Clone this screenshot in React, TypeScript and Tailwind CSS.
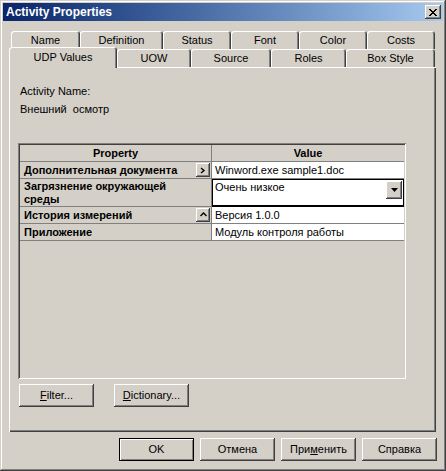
import React from "react";

const row1 = [
  { label: "Name", w: "w-[69px]" },
  { label: "Definition", w: "w-[83px]" },
  { label: "Status", w: "w-[68px]" },
  { label: "Font", w: "w-[68px]" },
  { label: "Color", w: "w-[68px]" },
  { label: "Costs", w: "w-[68px]" },
];

const row2 = [
  { label: "UOW", w: "w-[74px]" },
  { label: "Source", w: "w-[80px]" },
  { label: "Roles", w: "w-[75px]" },
  { label: "Box Style", w: "w-[89px]" },
];

function Tab({ label, w }: { label: string; w: string }) {
  return (
    <div
      className={`${w} h-[18px] shrink-0 flex items-center justify-center rounded-t-[3px] bg-[#d4d0c8] shadow-[inset_1px_1px_#ffffff,inset_-1px_0_#404040,inset_-2px_0_#808080]`}
    >
      {label}
    </div>
  );
}

function Button({ children, isDefault }: { children: React.ReactNode; isDefault?: boolean }) {
  if (isDefault) {
    return (
      <div className="w-[75px] h-[23px] shrink-0 flex items-center justify-center border border-black bg-[#d4d0c8] shadow-[inset_1px_1px_#ffffff,inset_-1px_-1px_#808080]">
        {children}
      </div>
    );
  }
  return (
    <div className="w-[75px] h-[23px] shrink-0 flex items-center justify-center bg-[#d4d0c8] shadow-[inset_-1px_-1px_#404040,inset_1px_1px_#ffffff,inset_-2px_-2px_#808080]">
      {children}
    </div>
  );
}

function SmallButton({ children }: { children: React.ReactNode }) {
  return (
    <div className="w-[14px] h-[14px] shrink-0 flex items-center justify-center bg-[#d4d0c8] shadow-[inset_-1px_-1px_#404040,inset_1px_1px_#ffffff,inset_-2px_-2px_#808080]">
      {children}
    </div>
  );
}

export default function App() {
  return (
    <div className="w-[446px] h-[471px] p-[3px] flex flex-col bg-[#d4d0c8] text-black text-[11px] leading-[13px] font-['Liberation_Sans',Arial,sans-serif] shadow-[inset_-1px_-1px_#404040,inset_1px_1px_#d4d0c8,inset_-2px_-2px_#808080,inset_2px_2px_#ffffff]">
      {/* title bar */}
      <div className="h-[18px] shrink-0 flex items-center justify-between bg-linear-to-r from-[#0a246a] to-[#a6caf0] pl-[3px] pr-[2px]">
        <span className="font-bold text-white text-[12px]">Activity Properties</span>
        <div className="w-[16px] h-[14px] flex items-center justify-center bg-[#d4d0c8] shadow-[inset_-1px_-1px_#404040,inset_1px_1px_#ffffff,inset_-2px_-2px_#808080]">
          <svg width="8" height="7" viewBox="0 0 8 7">
            <path d="M0 0h2v1h1v1h2v-1h1v-1h2v1h-1v1h-1v1h-1v1h1v1h1v1h1v1h-2v-1h-1v-1h-2v1h-1v1h-2v-1h1v-1h1v-1h1v-1h-1v-1h-1v-1h-1z" fill="#000" />
          </svg>
        </div>
      </div>

      {/* tabs */}
      <div className="ml-[6px] mt-[10px] flex flex-col">
        <div className="flex ml-[2px]">
          {row1.map((t) => (
            <Tab key={t.label} label={t.label} w={t.w} />
          ))}
        </div>
        <div className="flex h-[18px] items-start">
          <div className="relative z-10 w-[108px] h-[21px] -mt-[2px] pb-[1px] shrink-0 flex items-center justify-center rounded-t-[3px] bg-[#d4d0c8] shadow-[inset_1px_1px_#ffffff,inset_-1px_0_#404040,inset_-2px_0_#808080]">
            UDP Values
          </div>
          {row2.map((t) => (
            <Tab key={t.label} label={t.label} w={t.w} />
          ))}
        </div>

        {/* panel */}
        <div className="w-[427px] h-[365px] flex flex-col bg-[#d4d0c8] shadow-[inset_1px_1px_#ffffff,inset_-1px_-1px_#404040,inset_-2px_-2px_#808080]">
          <div className="pl-[11px] pt-[18px]">Activity Name:</div>
          <div className="pl-[11px] mt-[5px] whitespace-pre">Внешний  осмотр</div>

          {/* property grid */}
          <div className="ml-[9px] mt-[27px] w-[388px] h-[236px] p-[2px] shadow-[inset_1px_1px_#808080,inset_-1px_-1px_#ffffff,inset_2px_2px_#404040,inset_-2px_-2px_#d4d0c8]">
            <div className="flex h-[17px] font-bold">
              <div className="w-[192px] flex items-center justify-center border-r border-b border-[#808080]">Property</div>
              <div className="flex-1 flex items-center justify-center border-b border-[#808080]">Value</div>
            </div>

            <div className="flex h-[17px]">
              <div className="w-[192px] flex items-center justify-between pl-[4px] pr-[1px] font-bold border-r border-b border-[#808080]">
                <span>Дополнительная документа</span>
                <SmallButton>
                  <svg width="6" height="7" viewBox="0 0 6 7">
                    <path d="M1 1l3 2.5L1 6" stroke="#000" strokeWidth="1.4" fill="none" />
                  </svg>
                </SmallButton>
              </div>
              <div className="flex-1 flex items-center pl-[3px] bg-white border-b border-[#808080]">Winword.exe sample1.doc</div>
            </div>

            <div className="flex h-[28px]">
              <div className="w-[192px] pl-[4px] pt-[1px] font-bold border-r border-b border-[#808080]">
                Загрязнение окружающей
                <br />
                среды
              </div>
              <div className="flex-1 flex justify-between bg-white border border-black border-b-2">
                <span className="pl-[2px] pt-[1px]">Очень низкое</span>
                <div className="w-[16px] h-[18px] mt-[1px] mr-[1px] flex items-center justify-center bg-[#d4d0c8] shadow-[inset_-1px_-1px_#404040,inset_1px_1px_#ffffff,inset_-2px_-2px_#808080]">
                  <svg width="7" height="4" viewBox="0 0 7 4">
                    <path d="M0 0h7L3.5 4z" fill="#000" />
                  </svg>
                </div>
              </div>
            </div>

            <div className="flex h-[17px]">
              <div className="w-[192px] flex items-center justify-between pl-[4px] pr-[1px] font-bold border-r border-b border-[#808080]">
                <span>История измерений</span>
                <SmallButton>
                  <svg width="7" height="6" viewBox="0 0 7 6">
                    <path d="M0.5 4L3.5 1L6.5 4" stroke="#000" strokeWidth="1.4" fill="none" />
                  </svg>
                </SmallButton>
              </div>
              <div className="flex-1 flex items-center pl-[3px] bg-white border-b border-[#808080]">Версия 1.0.0</div>
            </div>

            <div className="flex h-[17px]">
              <div className="w-[192px] flex items-center pl-[4px] font-bold border-r border-b border-[#808080]">Приложение</div>
              <div className="flex-1 flex items-center pl-[3px] bg-white border-b border-[#808080]">Модуль контроля работы</div>
            </div>
          </div>

          <div className="flex gap-[20px] ml-[10px] mt-[5px]">
            <Button>
              <span>
                <span className="underline">F</span>ilter...
              </span>
            </Button>
            <Button>
              <span>
                <span className="underline">D</span>ictionary...
              </span>
            </Button>
          </div>
        </div>
      </div>

      {/* dialog buttons */}
      <div className="flex justify-end gap-[6px] mt-[6px] mr-[6px]">
        <Button isDefault>OK</Button>
        <Button>Отмена</Button>
        <Button>
          <span>
            При<span className="underline">м</span>енить
          </span>
        </Button>
        <Button>Справка</Button>
      </div>
    </div>
  );
}
